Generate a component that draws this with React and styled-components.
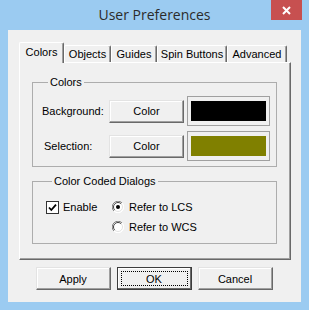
import styled, { createGlobalStyle } from "styled-components";

const GlobalStyle = createGlobalStyle`
  html, body {
    margin: 0;
    padding: 0;
    background: #9bcbf1;
  }
  * {
    box-sizing: border-box;
  }
`;

const Window = styled.div`
  width: 309px;
  height: 310px;
  display: flex;
  flex-direction: column;
  background: #9bcbf1;
  font-family: "Liberation Sans", Arial, sans-serif;
  font-size: 11px;
  color: #000;
`;

const TitleBar = styled.div`
  height: 30px;
  display: grid;
  grid-template-columns: 1fr auto 1fr;
  align-items: start;
`;

const Title = styled.div`
  grid-column: 2;
  padding-top: 5px;
  font-family: "Open Sans", "Noto Sans", sans-serif;
  font-size: 14px;
  line-height: 20px;
  color: #2b2b2b;
`;

const CloseButton = styled.div`
  grid-column: 3;
  justify-self: end;
  margin-right: 7px;
  width: 31px;
  height: 20px;
  background: #c75050;
  display: flex;
  align-items: center;
  justify-content: center;
`;

const Client = styled.div`
  flex: 1;
  margin: 0 8px 8px;
  background: #f0f0f0;
  padding: 12px 10px 0 11px;
  display: flex;
  flex-direction: column;
`;

const TabStrip = styled.div`
  height: 20px;
  display: flex;
  align-items: flex-end;
`;

const Tab = styled.div`
  position: relative;
  z-index: ${(p) => (p.$active ? 1 : 0)};
  width: ${(p) => p.$w}px;
  height: ${(p) => (p.$active ? 21 : 17)}px;
  margin-bottom: ${(p) => (p.$active ? -1 : 0)}px;
  padding-top: ${(p) => (p.$active ? 3 : 2)}px;
  text-align: center;
  background: #f0f0f0;
  border-top: 1px solid #fff;
  border-left: 1px solid #fff;
  border-right: 1px solid #696969;
  border-radius: 2px 2px 0 0;
  box-shadow: inset -1px 0 0 #a0a0a0;
  line-height: 13px;
  white-space: nowrap;
`;

const Panel = styled.div`
  width: 272px;
  border-top: 1px solid #fff;
  border-left: 1px solid #fff;
  border-right: 1px solid #696969;
  border-bottom: 1px solid #696969;
  box-shadow: inset -1px -1px 0 #a0a0a0;
  padding: 13px 13px 15px 12px;
`;

const Group = styled.fieldset`
  margin: ${(p) => (p.$first ? 0 : "8px 0 0")};
  padding: ${(p) => p.$pad};
  border: 1px solid #adadad;
  min-width: 0;
`;

const Legend = styled.legend`
  margin-left: 6px;
  padding: 0 2px;
  line-height: 13px;
`;

const ColorGrid = styled.div`
  display: grid;
  grid-template-columns: 64px 75px 83px;
  column-gap: 3px;
  row-gap: 5px;
  align-items: center;
`;

const RowLabel = styled.span`
  padding-left: ${(p) => p.$indent || 0}px;
`;

const PushButton = styled.button`
  position: relative;
  width: 75px;
  height: 23px;
  padding: 0;
  font-family: inherit;
  font-size: 11px;
  color: #000;
  background: #f0f0f0;
  border: 1px solid;
  border-color: #e3e3e3 #696969 #696969 #e3e3e3;
  box-shadow: inset -1px -1px 0 #a0a0a0, inset 1px 1px 0 #fff;
  ${(p) =>
    p.$default &&
    `
    border: 1px solid #3c3c3c;
    box-shadow: inset -1px -1px 0 #696969, inset 1px 1px 0 #fff;
    &::after {
      content: "";
      position: absolute;
      inset: 3px;
      border: 1px dotted #000;
    }
  `}
`;

const Swatch = styled.div`
  height: 30px;
  padding: 4px 3px;
  border: 1px solid #a0a0a0;
  background: #f0f0f0;
`;

const SwatchFill = styled.div`
  height: 20px;
  background: ${(p) => p.$color};
`;

const OptionGrid = styled.div`
  display: grid;
  grid-template-columns: 66px auto;
  grid-auto-rows: 20px;
  align-items: center;
`;

const Option = styled.label`
  grid-column: ${(p) => p.$col};
  display: flex;
  align-items: center;
  gap: ${(p) => p.$gap}px;
  line-height: 13px;
`;

const ButtonRow = styled.div`
  display: flex;
  justify-content: center;
  gap: 6px;
  margin: 7px 2px 0 0;
`;

function CheckBox() {
  return (
    <svg width="13" height="13" viewBox="0 0 13 13">
      <rect x="0.5" y="0.5" width="12" height="12" fill="#fff" stroke="#333" />
      <path d="M3 6.5 L5.3 9 L10 3.6" fill="none" stroke="#000" strokeWidth="1.8" />
    </svg>
  );
}

function Radio({ checked }) {
  return (
    <svg width="12" height="12" viewBox="0 0 12 12">
      <circle cx="6" cy="6" r="5.5" fill="#fff" />
      <path d="M1.9 10.1 A5.5 5.5 0 0 1 10.1 1.9" fill="none" stroke="#808080" />
      <path d="M2.8 9.2 A4.5 4.5 0 0 1 9.2 2.8" fill="none" stroke="#404040" />
      <path d="M10.1 1.9 A5.5 5.5 0 0 1 1.9 10.1" fill="none" stroke="#fff" />
      <path d="M9.2 2.8 A4.5 4.5 0 0 1 2.8 9.2" fill="none" stroke="#e3e3e3" />
      {checked && <circle cx="6" cy="6" r="2" fill="#000" />}
    </svg>
  );
}

const tabs = [
  { label: "Colors", w: 45, active: true },
  { label: "Objects", w: 47 },
  { label: "Guides", w: 46 },
  { label: "Spin Buttons", w: 70 },
  { label: "Advanced", w: 60 },
];

export default function App() {
  return (
    <>
      <GlobalStyle />
      <Window>
        <TitleBar>
          <Title>User Preferences</Title>
          <CloseButton>
            <svg width="9" height="9" viewBox="0 0 9 9">
              <path d="M1 1 L8 8 M8 1 L1 8" stroke="#fff" strokeWidth="2" />
            </svg>
          </CloseButton>
        </TitleBar>
        <Client>
          <TabStrip>
            {tabs.map((t) => (
              <Tab key={t.label} $w={t.w} $active={t.active}>
                {t.label}
              </Tab>
            ))}
          </TabStrip>
          <Panel>
            <Group $first $pad="7px 0 5px 9px">
              <Legend>Colors</Legend>
              <ColorGrid>
                <RowLabel>Background:</RowLabel>
                <PushButton>Color</PushButton>
                <Swatch>
                  <SwatchFill $color="#000" />
                </Swatch>
                <RowLabel $indent={2}>Selection:</RowLabel>
                <PushButton>Color</PushButton>
                <Swatch>
                  <SwatchFill $color="#808000" />
                </Swatch>
              </ColorGrid>
            </Group>
            <Group $pad="9px 0 6px 13px">
              <Legend>Color Coded Dialogs</Legend>
              <OptionGrid>
                <Option $col={1} $gap={4}>
                  <CheckBox />
                  Enable
                </Option>
                <Option $col={2} $gap={5}>
                  <Radio checked />
                  Refer to LCS
                </Option>
                <Option $col={2} $gap={5}>
                  <Radio />
                  Refer to WCS
                </Option>
              </OptionGrid>
            </Group>
          </Panel>
          <ButtonRow>
            <PushButton>Apply</PushButton>
            <PushButton $default>OK</PushButton>
            <PushButton>Cancel</PushButton>
          </ButtonRow>
        </Client>
      </Window>
    </>
  );
}
